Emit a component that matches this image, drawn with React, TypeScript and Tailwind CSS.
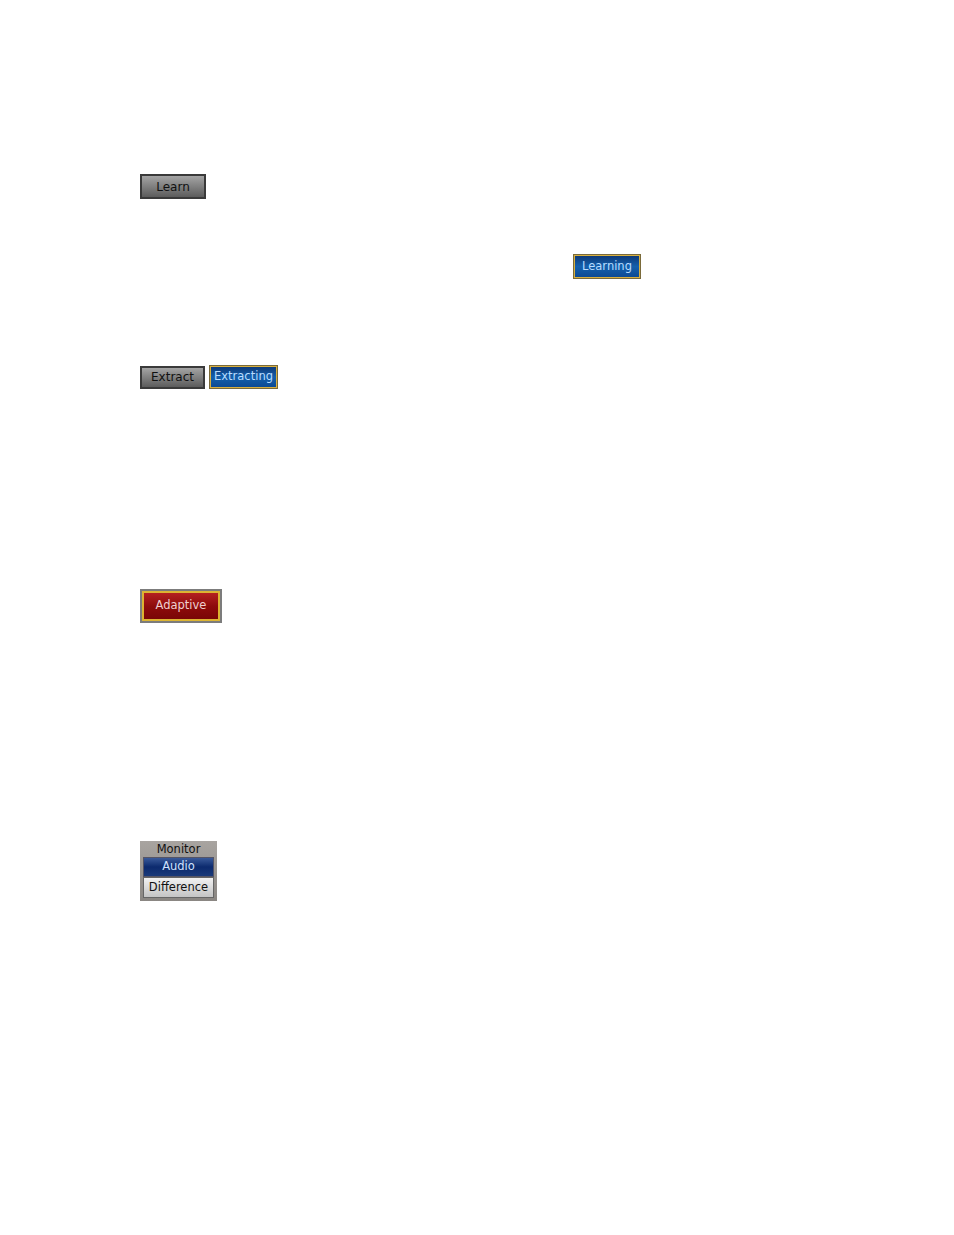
import React from "react";

const font = { fontFamily: '"DejaVu Sans", "Liberation Sans", sans-serif' };

function GrayBtn({ label, w, h }: { label: string; w: string; h: string }) {
  return (
    <div className={`${w} ${h} bg-[#3a3a3a] p-[2px] box-border`}>
      <div className="w-full h-full bg-gradient-to-b from-[#a4a4a4] via-[#808080] to-[#5c5c5c] flex items-center justify-center text-[12px] text-[#111] leading-none">
        {label}
      </div>
    </div>
  );
}

function BlueBtn({ label, w, h }: { label: string; w: string; h: string }) {
  return (
    <div className={`${w} ${h} bg-[#7a6a3a] p-px box-border`}>
      <div className="w-full h-full border-[1.5px] border-[#d8b040] bg-gradient-to-b from-[#0e3a78] via-[#1460ac] to-[#0c4a94] flex items-center justify-center text-[11.5px] text-[#b8dcff] leading-none">
        {label}
      </div>
    </div>
  );
}

export default function App() {
  return (
    <div className="w-[954px] h-[1235px] bg-white relative" style={font}>
      <div className="pt-[174px] pl-[140px]">
        <GrayBtn label="Learn" w="w-[66px]" h="h-[25px]" />
      </div>
      <div className="pt-[55px] pl-[573px]">
        <BlueBtn label="Learning" w="w-[68px]" h="h-[25px]" />
      </div>
      <div className="pt-[86px] pl-[140px] flex items-center gap-[4px]">
        <GrayBtn label="Extract" w="w-[65px]" h="h-[23px]" />
        <BlueBtn label="Extracting" w="w-[69px]" h="h-[24px]" />
      </div>
      <div className="pt-[200px] pl-[140px]">
        <div className="w-[82px] h-[34px] bg-[#7c7c7c] p-[2px] box-border">
          <div className="w-full h-full border-2 border-[#dcb432] bg-gradient-to-b from-[#b42020] via-[#8e0c0c] to-[#7a0606] flex items-center justify-center text-[11.5px] text-[#f0d0d0] leading-none">
            Adaptive
          </div>
        </div>
      </div>
      <div className="pt-[218px] pl-[140px]">
        <div className="w-[77px] h-[60px] bg-gradient-to-b from-[#a8a4a0] to-[#8a8682] box-border px-[3px] pt-[1px] flex flex-col">
          <div className="h-[15px] text-[11.5px] leading-none text-[#111] flex items-center justify-center">Monitor</div>
          <div className="h-[20px] bg-gradient-to-b from-[#3a5a9a] via-[#0c2a6e] to-[#1a3a7a] border border-[#556] flex items-center justify-center text-[11.5px] text-[#d0e2ff] leading-none">
            Audio
          </div>
          <div className="h-[21px] bg-gradient-to-b from-[#f2f2f2] to-[#c4c4c4] border border-[#666] flex items-center justify-center text-[11.5px] text-[#111] leading-none">
            Difference
          </div>
        </div>
      </div>
    </div>
  );
}
